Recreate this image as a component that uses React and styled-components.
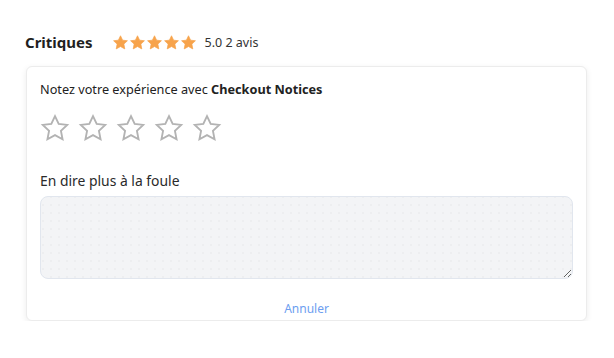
import React from "react";
import styled, { createGlobalStyle } from "styled-components";

const Global = createGlobalStyle`
  html, body { margin: 0; padding: 0; background: #fff; }
  body { font-family: "Noto Sans", "Open Sans", sans-serif; color: #222; }
`;

const Page = styled.div`
  padding: 31px 27px 0 25px;
  width: 614px;
  box-sizing: border-box;
`;

const Header = styled.div`
  display: flex;
  align-items: center;
  height: 22px;
  margin-bottom: 13px;
`;

const Title = styled.h2`
  margin: 0 19px 0 0;
  font-size: 15px;
  font-weight: 700;
  color: #1f1f1f;
`;

const StarsRow = styled.div`
  display: flex;
  align-items: center;
  gap: ${(p) => p.$gap}px;
`;

const Meta = styled.span`
  margin-left: 8px;
  font-size: 12.5px;
  color: #333;
`;

const Card = styled.div`
  margin-left: 1px;
  background: #fff;
  border: 1px solid #ececec;
  border-radius: 6px;
  box-shadow: 0 2px 6px rgba(0, 0, 0, 0.08);
  padding: 13px 13px 3px 13px;
  display: flex;
  flex-direction: column;
`;

const Prompt = styled.p`
  margin: 0;
  font-size: 12.7px;
  color: #222;
  b { font-weight: 700; }
`;

const RatingStars = styled(StarsRow)`
  margin-top: 15px;
`;

const Label = styled.label`
  margin-top: 28px;
  font-size: 13.9px;
  color: #2a2a2a;
`;

const TextArea = styled.textarea`
  margin-top: 6px;
  height: 83px;
  box-sizing: border-box;
  border: 1px solid #e1e6ee;
  border-radius: 8px;
  background-color: #f3f4f6;
  background-image: radial-gradient(circle, rgba(0,0,0,0.035) 0.6px, transparent 0.9px);
  background-size: 8px 8px;
  background-position: 6px 4px;
  resize: vertical;
  font-family: inherit;
  font-size: 13px;
  padding: 8px;
  outline: none;
`;

const Cancel = styled.button`
  align-self: center;
  margin-top: 21px;
  background: none;
  border: none;
  padding: 0;
  font-family: inherit;
  font-size: 12px;
  color: #6c9ef0;
  cursor: pointer;
`;

const STAR = "M12 2.5l2.95 6.2 6.8.85-5 4.7 1.3 6.75L12 17.7l-6.05 3.3 1.3-6.75-5-4.7 6.8-.85z";

const FilledStar = () => (
  <svg width="17" height="17" viewBox="0 0 24 24">
    <path d={STAR} fill="#f7a34b" stroke="#f7a34b" strokeWidth="1" strokeLinejoin="round" />
  </svg>
);

const EmptyStar = () => (
  <svg width="30" height="30" viewBox="0 0 24 24">
    <path d={STAR} fill="none" stroke="#b3b3b3" strokeWidth="1.5" strokeLinejoin="miter" />
  </svg>
);

export default function App() {
  return (
    <>
      <Global />
      <Page>
        <Header>
          <Title>Critiques</Title>
          <StarsRow $gap={0}>
            {[0, 1, 2, 3, 4].map((i) => <FilledStar key={i} />)}
          </StarsRow>
          <Meta>5.0 2 avis</Meta>
        </Header>
        <Card>
          <Prompt>
            Notez votre expérience avec <b>Checkout Notices</b>
          </Prompt>
          <RatingStars $gap={8}>
            {[0, 1, 2, 3, 4].map((i) => <EmptyStar key={i} />)}
          </RatingStars>
          <Label>En dire plus à la foule</Label>
          <TextArea />
          <Cancel>Annuler</Cancel>
        </Card>
      </Page>
    </>
  );
}
